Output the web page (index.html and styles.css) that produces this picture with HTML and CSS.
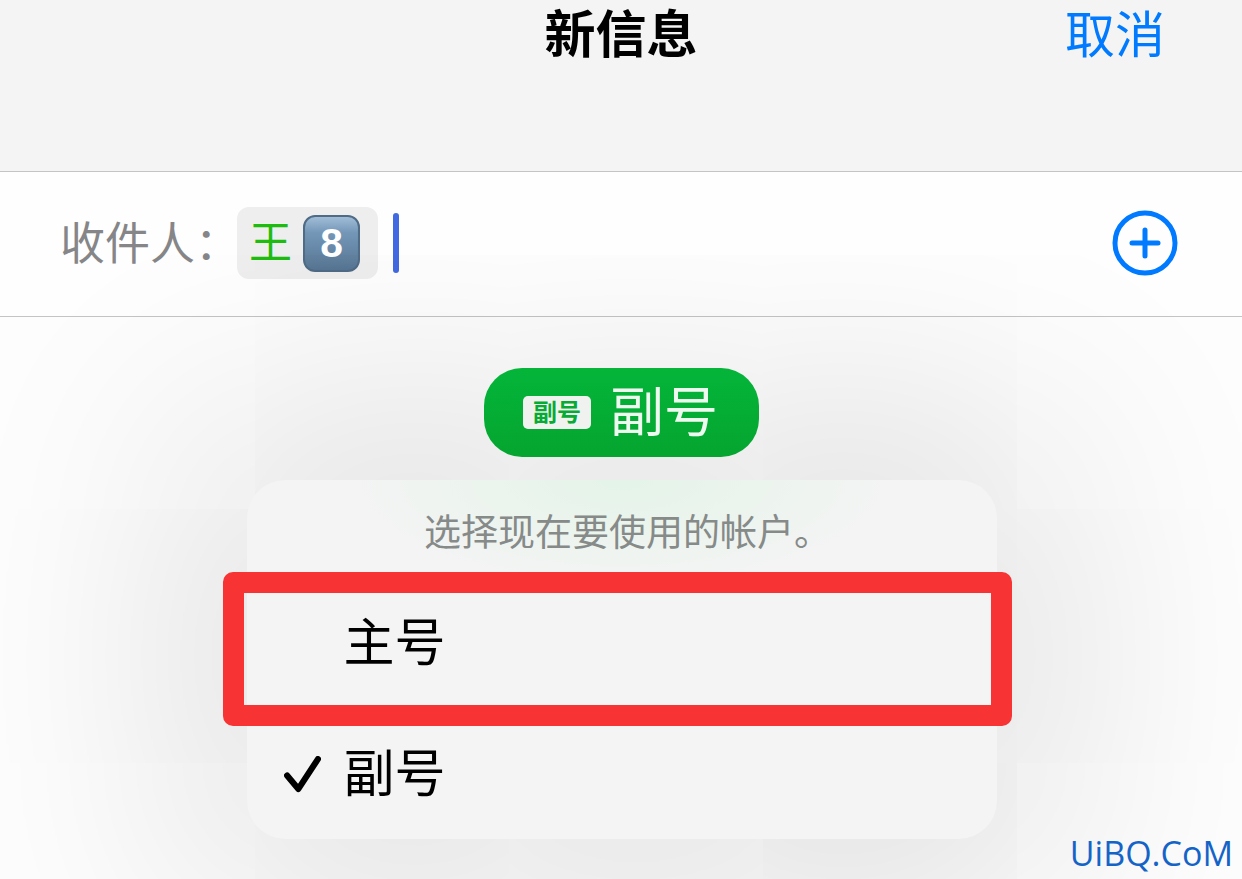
FILE: index.html
```html
<!DOCTYPE html>
<html lang="zh-CN">
<head>
    <meta charset="UTF-8">
    <meta name="viewport" content="width=device-width, initial-scale=1.0">
    <title>新信息</title>
    <link rel="stylesheet" href="styles.css">
</head>
<body>
    <header class="header">
        <h1>新信息</h1>
        <button class="cancel">取消</button>
    </header>

    <div class="recipients">
        <label for="to">收件人：</label>
        <span class="chip">
            王
            <svg class="keycap" viewBox="0 0 56 56" role="img" aria-label="8">
                <defs>
                    <linearGradient id="key" x1="0" y1="0" x2="0" y2="1">
                        <stop offset="0" stop-color="#a3bfd9"/>
                        <stop offset="0.3" stop-color="#7497b8"/>
                        <stop offset="1" stop-color="#567492"/>
                    </linearGradient>
                </defs>
                <rect x="1" y="1" width="54" height="54" rx="11" fill="url(#key)" stroke="#4f6b86" stroke-width="2"/>
                <text x="28" y="41" text-anchor="middle">8</text>
            </svg>
        </span>
        <span class="caret"></span>
        <input type="text" id="to">
        <button class="add" aria-label="添加联系人">
            <svg viewBox="0 0 66 66">
                <circle cx="33" cy="33" r="30"/>
                <path d="M33 20v26M20 33h26"/>
            </svg>
        </button>
    </div>

    <main class="content">
        <button class="account">
            <span class="badge">副号</span>
            <span>副号</span>
        </button>

        <div class="menu" role="menu">
            <p class="menu-title">选择现在要使用的帐户。</p>
            <button class="menu-item marked" role="menuitemradio" aria-checked="false">主号</button>
            <button class="menu-item" role="menuitemradio" aria-checked="true">
                <svg class="check" viewBox="0 0 36 36">
                    <path d="M3 19L14 32L33 3"/>
                </svg>
                副号
            </button>
        </div>
    </main>

    <div class="watermark">UiBQ.CoM</div>
</body>
</html>
```

FILE: styles.css
```css
* {
    box-sizing: border-box;
}

body {
    font-family: "Liberation Sans", "Noto Sans CJK SC", sans-serif;
    font-weight: 400;
    background-color: #fdfdfd;
    color: black;
    margin: 0;
    min-height: 100vh;
    position: relative;
    overflow: hidden;
}

button {
    font: inherit;
    color: inherit;
    background: none;
    border: none;
    padding: 0;
    cursor: pointer;
}

svg {
    display: block;
}

.header {
    display: grid;
    grid-template-columns: 1fr auto 1fr;
    align-items: start;
    height: 172px;
    padding: 0 77px;
    background-color: #f4f4f4;
    border-bottom: 1px solid #c4c4c6;
}

.header h1 {
    grid-column: 2;
    margin: 0;
    font-size: 51px;
    line-height: 72px;
    font-weight: 600;
}

.cancel {
    justify-self: end;
    font-size: 50px;
    line-height: 72px;
    color: #007aff;
}

.recipients {
    display: flex;
    align-items: center;
    height: 145px;
    padding: 0 64px 2px 60px;
    background-color: #fefefe;
    border-bottom: 1px solid #c4c4c6;
}

.recipients label {
    width: 177px;
    padding-top: 4px;
    font-size: 45px;
    line-height: 64px;
    white-space: nowrap;
    color: #868688;
}

.chip {
    display: flex;
    align-items: center;
    gap: 11px;
    height: 72px;
    padding: 0 18px 0 12px;
    border-radius: 12px;
    background-color: #eeeeef;
    font-size: 43px;
    line-height: 64px;
    color: #1fbc10;
}

.keycap {
    width: 57px;
    height: 57px;
}

.keycap text {
    font-family: "Liberation Sans", sans-serif;
    font-size: 40px;
    font-weight: bold;
    fill: white;
}

.caret {
    width: 6px;
    height: 60px;
    margin-left: 15px;
    border-radius: 3px;
    background-color: #4169e1;
}

.recipients input {
    flex: 1;
    min-width: 0;
    height: 60px;
    border: none;
    outline: none;
    background: none;
    font: inherit;
    font-size: 43px;
}

.add svg {
    width: 66px;
    height: 66px;
    fill: none;
    stroke: #007aff;
    stroke-width: 5;
    stroke-linecap: round;
}

.content {
    position: relative;
    display: flex;
    flex-direction: column;
    align-items: center;
    gap: 23px;
    padding: 51px 23px 40px 24px;
}

.account {
    position: relative;
    z-index: 1;
    display: flex;
    align-items: center;
    gap: 19px;
    height: 89px;
    padding: 0 41px 0 39px;
    border-radius: 38px;
    background: linear-gradient(#04b53a, #05a52f);
    color: #eefaf0;
    font-size: 54px;
    line-height: 72px;
}

.badge {
    padding: 0 10px;
    border-radius: 5px;
    background-color: #f0f2f0;
    color: #05ab33;
    font-size: 24px;
    line-height: 33px;
    font-weight: 600;
}

.menu {
    width: 100%;
    max-width: 750px;
    border-radius: 38px;
    background: radial-gradient(ellipse 280px 110px at 50% 0, #e4f4e8, #f4f4f4) #f4f4f4;
    box-shadow: 0 0 240px 70px rgba(0, 0, 0, 0.12);
}

.menu-title {
    margin: 0;
    padding: 26px 0 15px 12px;
    text-align: center;
    font-size: 37px;
    line-height: 56px;
    color: #868a88;
}

.menu-item {
    position: relative;
    display: flex;
    align-items: center;
    gap: 23px;
    width: 100%;
    height: 131px;
    padding: 2px 0 0 37px;
    font-size: 51px;
    line-height: 72px;
}

.menu-item.marked {
    padding-left: 97px;
}

/* red frame round the account to pick */
.marked::after {
    content: "";
    position: absolute;
    top: -5px;
    bottom: -18px;
    left: -24px;
    right: -15px;
    border: 21px solid #f83333;
    border-radius: 10px;
}

.check {
    width: 37px;
    height: 37px;
    fill: none;
    stroke: black;
    stroke-width: 6;
    stroke-linecap: round;
    stroke-linejoin: round;
}

.watermark {
    position: absolute;
    right: 9px;
    bottom: 4px;
    font-family: "Open Sans", sans-serif;
    font-size: 34px;
    line-height: 44px;
    color: #1464c8;
}
```
